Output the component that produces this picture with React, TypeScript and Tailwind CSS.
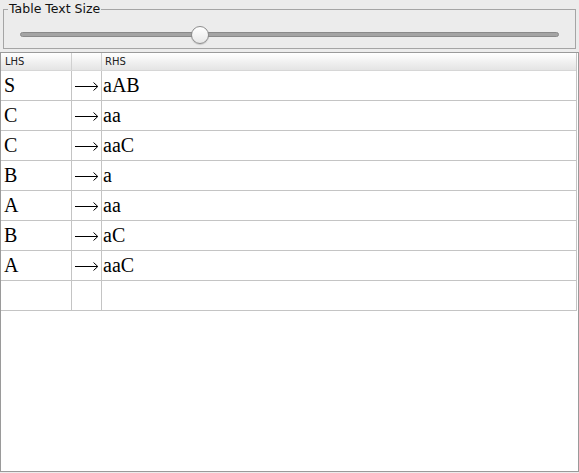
const rows: [string, string][] = [
  ['S', 'aAB'],
  ['C', 'aa'],
  ['C', 'aaC'],
  ['B', 'a'],
  ['A', 'aa'],
  ['B', 'aC'],
  ['A', 'aaC'],
  ['', ''],
];

function LongArrow() {
  return (
    <svg width="24" height="10" viewBox="0 0 24 10" className="mt-[10px]">
      <path d="M0 5.5H22.5" stroke="#000" strokeWidth="1" fill="none" />
      <path d="M18.5 1.5L22.8 5.5L18.5 9.5" stroke="#000" strokeWidth="1" fill="none" />
    </svg>
  );
}

export default function App() {
  return (
    <div className="w-[579px] h-[473px] bg-[#ececec] flex flex-col overflow-hidden">
      {/* Text size slider */}
      <div className="h-[52px] pt-[2px] px-[3px]">
        <fieldset className="h-[47px] border border-[#a5a5a5] px-[4px] pt-0 m-0 min-w-0">
          <legend className="text-[12.5px] leading-[14px] text-[#111] px-[1px] font-['DejaVu_Sans',sans-serif]">
            Table Text Size
          </legend>
          <div className="relative mt-[10px] ml-[12px] mr-[12px] h-[18px]">
            <div className="absolute left-0 right-0 top-[6px] h-[5px] rounded-full bg-[#a4a4a4] border border-[#8a8a8a]" />
            <div className="absolute left-[171px] top-0 w-[18px] h-[18px] rounded-full bg-gradient-to-b from-white to-[#e8e8e8] border border-[#8d8d8d] shadow-[0_1px_1px_rgba(0,0,0,0.15)]" />
          </div>
        </fieldset>
      </div>

      {/* Grammar table */}
      <div className="flex-1 mb-[1px] border border-[#9a9a9a] bg-white">
        <div className="w-[576px] border-r border-[#c4c4c4]">
          <div className="flex h-[18px] bg-gradient-to-b from-white to-[#e4e4e4] border-b border-[#d6d6d6] text-[10px] leading-[17px] text-[#222] font-['DejaVu_Sans',sans-serif]">
            <div className="w-[71px] pl-[4px] border-r border-[#d0d0d0]">LHS</div>
            <div className="w-[30px] border-r border-[#d0d0d0]" />
            <div className="flex-1 pl-[3px]">RHS</div>
          </div>
          {rows.map(([lhs, rhs], i) => (
            <div
              key={i}
              className="flex h-[30px] border-b border-[#c4c4c4] text-[20px] leading-[28px] text-black font-['Liberation_Serif',serif]"
            >
              <div className="w-[71px] pl-[3px] border-r border-[#c4c4c4]">{lhs}</div>
              <div className="w-[30px] pl-[3px] border-r border-[#c4c4c4]">{lhs ? <LongArrow /> : null}</div>
              <div className="flex-1 pl-[1px]">{rhs}</div>
            </div>
          ))}
        </div>
      </div>
    </div>
  );
}
